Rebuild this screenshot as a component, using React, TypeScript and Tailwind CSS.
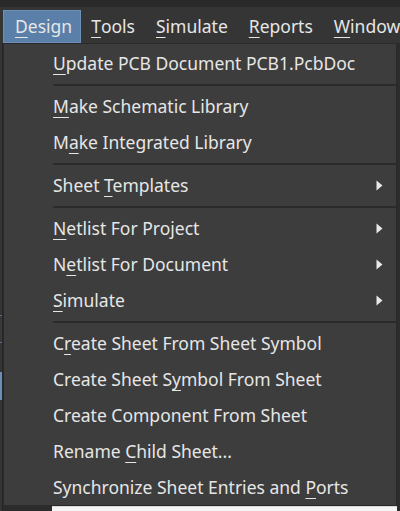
import React from "react";

type Item =
  | { kind: "sep" }
  | { kind: "item"; pre: string; u: string; post: string; sub?: boolean };

const items: Item[] = [
  { kind: "item", pre: "", u: "U", post: "pdate PCB Document PCB1.PcbDoc" },
  { kind: "sep" },
  { kind: "item", pre: "", u: "M", post: "ake Schematic Library" },
  { kind: "item", pre: "M", u: "a", post: "ke Integrated Library" },
  { kind: "sep" },
  { kind: "item", pre: "Sheet ", u: "T", post: "emplates", sub: true },
  { kind: "sep" },
  { kind: "item", pre: "", u: "N", post: "etlist For Project", sub: true },
  { kind: "item", pre: "N", u: "e", post: "tlist For Document", sub: true },
  { kind: "item", pre: "", u: "S", post: "imulate", sub: true },
  { kind: "sep" },
  { kind: "item", pre: "C", u: "r", post: "eate Sheet From Sheet Symbol" },
  { kind: "item", pre: "Create Sheet S", u: "y", post: "mbol From Sheet" },
  { kind: "item", pre: "Create Component From Sheet", u: "", post: "" },
  { kind: "item", pre: "Rename ", u: "C", post: "hild Sheet..." },
  { kind: "item", pre: "Synchronize Sheet Entries and ", u: "P", post: "orts" },
];

const menus = [
  { u: "D", rest: "esign", active: true, cls: "pl-[11px] pr-[8px]" },
  { u: "T", rest: "ools", active: false, cls: "pl-[10px] pr-[11px]" },
  { u: "S", rest: "imulate", active: false, cls: "pl-[10px] pr-[11px]" },
  { u: "R", rest: "eports", active: false, cls: "pl-[10px] pr-[11px]" },
  { u: "W", rest: "indow", active: false, cls: "pl-[10px] pr-[11px]" },
];

function U({ c }: { c: string }) {
  return <span className="underline decoration-1 underline-offset-[4px]">{c}</span>;
}

export default function App() {
  return (
    <div
      className="w-[400px] h-[511px] bg-[#2c2c2c] overflow-hidden flex flex-col text-[#e6e6e6]"
      style={{ fontFamily: '"Noto Sans", "Open Sans", sans-serif' }}
    >
      <div className="h-[7px] bg-[#2a2a2a]" />
      <div className="h-[36px] bg-[#353535] flex items-stretch pl-[3px] whitespace-nowrap text-[17.5px]">
        {menus.map((m) => (
          <div
            key={m.rest}
            className={`flex items-center mt-[3px] ${m.cls} ${m.active ? "bg-[#5a7fa8] border border-[#6d90b8]" : ""}`}
          >
            <U c={m.u} />
            {m.rest}
          </div>
        ))}
      </div>
      <div className="flex flex-1 min-h-0">
        <div className="w-[3px] flex flex-col bg-[#343434] border-r border-[#252525]">
          <div className="h-[272px]" />
          <div className="h-[28px] border-y border-[#4d6f96] bg-[#3a3a3a]" />
          <div className="h-[29px]" />
          <div className="h-[28px] bg-[#6b8fb8]" />
        </div>
        <div className="w-[394px] flex flex-col">
          <div className="h-[463px] bg-[#3d3d3d] border border-[#2a2a2a] pt-[1px] text-[17.5px] whitespace-nowrap">
            {items.map((it, i) =>
              it.kind === "sep" ? (
                <div key={i} className="h-[7px] flex items-center pl-[49px]">
                  <div className="h-[2px] w-full bg-[#2b2b2b]" />
                </div>
              ) : (
                <div key={i} className="h-[36px] flex items-center pl-[49px] pr-[13px]">
                  <span className="flex-1">
                    {it.pre}
                    {it.u && <U c={it.u} />}
                    {it.post}
                  </span>
                  {it.sub && (
                    <svg width="7" height="11" viewBox="0 0 7 11">
                      <path d="M0.5 0.5 L6.5 5.5 L0.5 10.5 Z" fill="#e8e8e8" />
                    </svg>
                  )}
                </div>
              )
            )}
          </div>
          <div className="flex-1 flex">
            <div className="w-[49px] bg-[#2c2c2c]" />
            <div className="flex-1 bg-[#f4f4f4] border-t border-[#d8d8d8]" />
          </div>
        </div>
        <div className="w-[3px] bg-[#2c2c2c]" />
      </div>
    </div>
  );
}
